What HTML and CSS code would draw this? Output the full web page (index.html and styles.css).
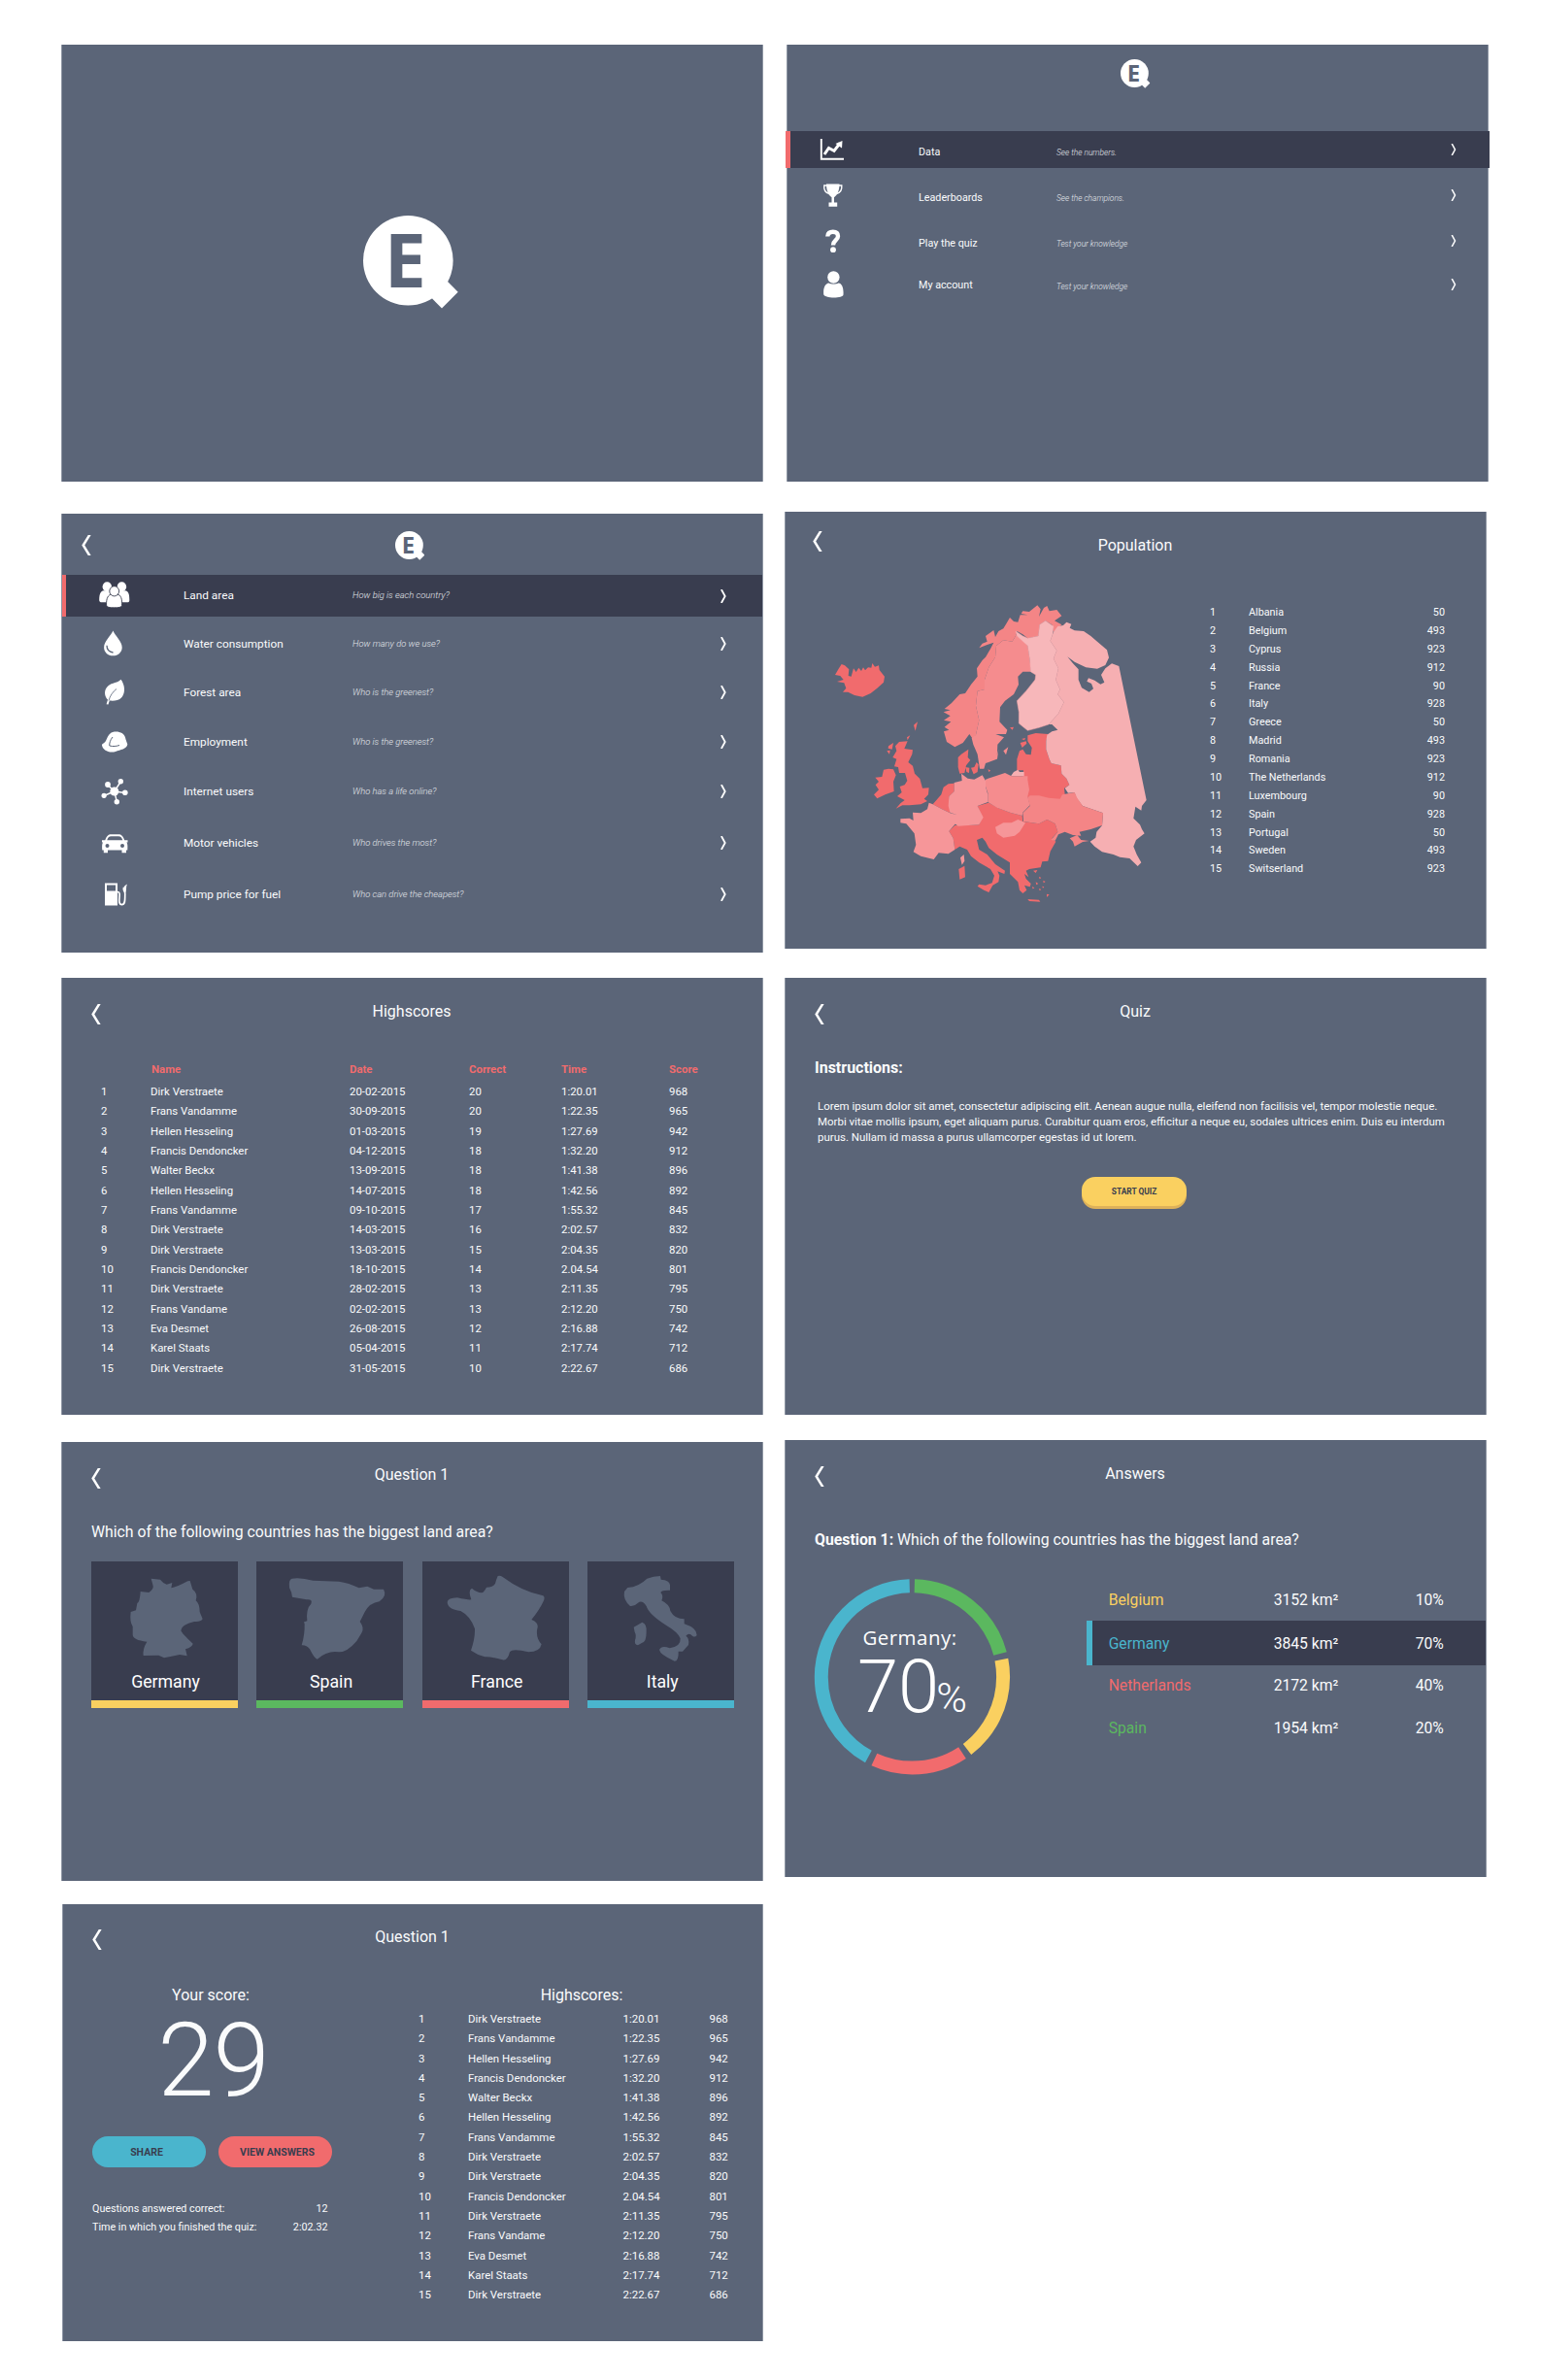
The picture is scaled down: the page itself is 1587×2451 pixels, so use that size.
FILE: index.html
```html
<!DOCTYPE html>
<html lang="en">
<head>
<meta charset="utf-8">
<title>EuroQuiz screens</title>
<link rel="stylesheet" href="styles.css">
</head>
<body>
<svg class="defs" width="0" height="0" aria-hidden="true">
  <symbol id="logo-shape" viewBox="0 0 98 96">
    <circle cx="46.3" cy="46.3" r="46.3" fill="#fff"/>
    <path d="M60 60L87.3 68.3L97.7 78.7L81 95.4L71.3 85.7Z" fill="#fff"/>
  </symbol>
  <symbol id="back" viewBox="0 0 10 21"><path d="M8.800 -1L1.700 10.5L8.800 22" fill="none" stroke="#fff" stroke-width="2.500"/></symbol>
  <symbol id="next" viewBox="0 0 6 14"><path d="M.9 0L4.700 7L.9 14" fill="none" stroke="#fff" stroke-width="1.800"/></symbol>
</svg>
<main class="board">
<div class="column column--left">

  <section class="screen splash">
    <svg class="splash-logo" viewBox="0 0 98 96"><use href="#logo-shape"/><text x="21.800" y="74" class="logo-letter">E</text></svg>
  </section>

  <section class="screen categories">
    <header class="bar bar--logo">
      <svg class="back"><use href="#back"/></svg>
      <svg class="small-logo" viewBox="0 0 98 96"><use href="#logo-shape"/><text x="21.800" y="74" class="logo-letter">E</text></svg>
    </header>
    <nav class="menu">
      <a class="row row--active">
        <svg class="icon" viewBox="0 0 32 28"><g fill="#fff"><ellipse cx="8.3" cy="5.2" rx="4.7" ry="5"/><ellipse cx="23.4" cy="5.2" rx="4.7" ry="5"/><path d="M.2 19C.2 12 2 9.5 4.5 9.2H12V21.3H4C1.500 21.500.2 21 .2 19ZM31.300 19C31.300 12 30 9.500 27 9.200H20V21.300H28C30.500 21.500 31.300 21 31.300 19Z"/></g><g fill="#fff" stroke="#393d4f" stroke-width=".9"><path d="M7.600 24C7.300 17 9.500 13.500 12.500 13.300H19C22.500 13.500 24 18 23.500 24.500C23 26.500 20 26.800 15.600 26.800C11 26.800 7.800 26.500 7.600 24Z"/><ellipse cx="15.700" cy="9.800" rx="4.900" ry="5.100"/></g></svg>
        <span class="label">Land area</span><span class="hint">How big is each country?</span>
        <svg class="next"><use href="#next"/></svg>
      </a>
      <a class="row">
        <svg class="icon" viewBox="0 0 32 28"><path d="M14.400.500C16 5 23.700 11.500 23.700 17.700C23.700 22.600 19.600 26.300 14.400 26.300S5.100 22.600 5.100 17.700C5.100 11.500 12.700 5 14.400.500Z" fill="#fff"/><path d="M8 15.800C8 19.500 10 22.300 14.500 23" fill="none" stroke="#5b6578" stroke-width="1.300"/></svg>
        <span class="label">Water consumption</span><span class="hint">How many do we use?</span>
        <svg class="next"><use href="#next"/></svg>
      </a>
      <a class="row">
        <svg class="icon" viewBox="0 0 32 28"><path d="M22.500.700C26.500 6 27.500 14 23.500 19C20 23 15 22.800 10.800 22.600L9.500 26.600L7.600 26.200L9 21.600C5.500 18 4.500 11.500 9.500 7.200C13 4 20 4 22.500.700Z" fill="#fff"/><path d="M18 10.500C14 13.500 11 18 10 22.600" fill="none" stroke="#5b6578" stroke-width=".8"/></svg>
        <span class="label">Forest area</span><span class="hint">Who is the greenest?</span>
        <svg class="next"><use href="#next"/></svg>
      </a>
      <a class="row row--fourth">
        <svg class="icon" viewBox="0 0 32 28"><path d="M3 17.500C3 15.500 5 16 7 13C8.500 10 10 5 14 4C20 2.500 26 5 27 9.500C27.500 12 28.500 14 29.300 16.500C28.500 21.500 22 22 17 24C10 26 3.500 22 3 17.500Z" fill="#fff"/><path d="M14 9C11.500 12 10.500 15.500 10.800 18C14.500 19 18 18.500 21 17.500" fill="none" stroke="#5b6578" stroke-width="1"/></svg>
        <span class="label">Employment</span><span class="hint">Who is the greenest?</span>
        <svg class="next"><use href="#next"/></svg>
      </a>
      <a class="row row--fifth">
        <svg class="icon" viewBox="0 0 32 28"><path d="M15.800 14L22.300 4M15.800 14L9 7.500M15.800 14L5 18.500M15.800 14L26.700 15.500M15.800 14L18.300 24.500" stroke="#fff" stroke-width="1.400"/><g fill="#fff"><circle cx="15.800" cy="14" r="4.500"/><circle cx="22.300" cy="3.700" r="2.700"/><circle cx="9" cy="7" r="2.900"/><circle cx="5.100" cy="18.300" r="2.600"/><circle cx="26.800" cy="15.300" r="2.800"/><circle cx="18.300" cy="24.700" r="2.700"/></g></svg>
        <span class="label">Internet users</span><span class="hint">Who has a life online?</span>
        <svg class="next"><use href="#next"/></svg>
      </a>
      <a class="row row--late">
        <svg class="icon" viewBox="0 0 32 28"><path d="M3 11.300H6.300C7.800 7 9.500 5.300 12.500 5.300H20C23 5.300 24.800 7 26.200 11.300H29.500V13.500H28.300C29.500 15 29.500 17 29.300 21.500H28V24.300H23.500V21.500H9V24.300H4.800V21.500H3.300C3 17 3 15 4.200 13.500H3Z" fill="#fff"/><path d="M8.200 11.300C9.200 8.300 10 7.200 12.500 7.200H20C22.500 7.200 23.300 8.300 24.300 11.300Z" fill="#5b6578"/><circle cx="8.500" cy="17" r="2" fill="#5b6578"/><circle cx="24" cy="17" r="2" fill="#5b6578"/></svg>
        <span class="label">Motor vehicles</span><span class="hint">Who drives the most?</span>
        <svg class="next"><use href="#next"/></svg>
      </a>
      <a class="row row--late">
        <svg class="icon" viewBox="0 0 32 28"><path d="M6 2.500H19V25.500H6Z" fill="#fff"/><path d="M8 4.500H17V10.500H8Z" fill="#5b6578"/><path d="M19 11.500C21.500 11.500 21.300 14 21 17C20.500 21 20.500 24.600 23.500 24.600C27.500 24.600 26.500 19 26.800 14C27 10 24.500 10 25.500 7" fill="none" stroke="#fff" stroke-width="1.700"/><path d="M25 11C24.500 8 25.500 5 29 3.500C27.500 6 28.500 9 27.500 12Z" fill="#fff"/></svg>
        <span class="label">Pump price for fuel</span><span class="hint">Who can drive the cheapest?</span>
        <svg class="next"><use href="#next"/></svg>
      </a>
    </nav>
  </section>

  <section class="screen highscores">
    <header class="bar"><svg class="back"><use href="#back"/></svg><h1>Highscores</h1></header>
    <div class="score-grid score-grid--head"><b></b><b>Name</b><b>Date</b><b>Correct</b><b>Time</b><b>Score</b></div>
    <div class="score-grid">
      <span>1</span><span>Dirk Verstraete</span><span>20-02-2015</span><span>20</span><span>1:20.01</span><span>968</span>
      <span>2</span><span>Frans Vandamme</span><span>30-09-2015</span><span>20</span><span>1:22.35</span><span>965</span>
      <span>3</span><span>Hellen Hesseling</span><span>01-03-2015</span><span>19</span><span>1:27.69</span><span>942</span>
      <span>4</span><span>Francis Dendoncker</span><span>04-12-2015</span><span>18</span><span>1:32.20</span><span>912</span>
      <span>5</span><span>Walter Beckx</span><span>13-09-2015</span><span>18</span><span>1:41.38</span><span>896</span>
      <span>6</span><span>Hellen Hesseling</span><span>14-07-2015</span><span>18</span><span>1:42.56</span><span>892</span>
      <span>7</span><span>Frans Vandamme</span><span>09-10-2015</span><span>17</span><span>1:55.32</span><span>845</span>
      <span>8</span><span>Dirk Verstraete</span><span>14-03-2015</span><span>16</span><span>2:02.57</span><span>832</span>
      <span>9</span><span>Dirk Verstraete</span><span>13-03-2015</span><span>15</span><span>2:04.35</span><span>820</span>
      <span>10</span><span>Francis Dendoncker</span><span>18-10-2015</span><span>14</span><span>2.04.54</span><span>801</span>
      <span>11</span><span>Dirk Verstraete</span><span>28-02-2015</span><span>13</span><span>2:11.35</span><span>795</span>
      <span>12</span><span>Frans Vandame</span><span>02-02-2015</span><span>13</span><span>2:12.20</span><span>750</span>
      <span>13</span><span>Eva Desmet</span><span>26-08-2015</span><span>12</span><span>2:16.88</span><span>742</span>
      <span>14</span><span>Karel Staats</span><span>05-04-2015</span><span>11</span><span>2:17.74</span><span>712</span>
      <span>15</span><span>Dirk Verstraete</span><span>31-05-2015</span><span>10</span><span>2:22.67</span><span>686</span>
    </div>
  </section>

  <section class="screen question">
    <header class="bar"><svg class="back"><use href="#back"/></svg><h1>Question 1</h1></header>
    <p class="ask">Which of the following countries has the biggest land area?</p>
    <div class="cards">
      <div class="card card--yellow"><svg viewBox="112 384 453 330"><path d="M297 437L325 440Q335 453 345 455L362 450L359 466Q375 464 410 445L417 444L425 470Q442 482 435 505Q447 515 447 540L456 562Q450 572 430 570Q390 580 389 597Q390 605 426 638Q425 648 403 655L408 676L385 672L360 677L337 682L320 674L273 675Q270 655 284 632Q240 628 240 610V585Q230 570 234 540L250 535L254 513Q262 510 264 477L290 480Q305 470 303 460Z"/></svg><span>Germany</span></div>
      <div class="card card--green"><svg viewBox="625 384 453 330"><path d="M735 437Q760 432 800 443L880 446Q910 450 942 466L968 461L988 470L1018 470Q1030 490 1005 508Q975 512 960 540L945 570Q960 590 950 605L935 630Q905 665 880 664Q845 658 813 686Q805 685 790 655Q780 642 765 643Q775 610 774 575Q766 572 782 568Q778 530 794 515Q800 500 780 502L736 494Q735 480 727 465Q724 440 735 437Z"/></svg><span>Spain</span></div>
      <div class="card card--red"><svg viewBox="42 382 453 330"><path d="M275 427Q283 425 290 430Q350 475 415 488Q422 492 416 505Q405 530 379 562Q400 570 398 585Q390 615 410 638Q405 662 370 662Q320 650 312 662Q305 690 290 686Q250 675 235 677Q210 670 192 657Q205 620 204 590Q190 550 160 535Q120 530 119 508Q120 495 150 494Q185 502 193 500Q182 470 195 465Q210 478 225 479Q232 478 240 462Q268 462 270 440Z"/></svg><span>France</span></div>
      <div class="card card--teal"><svg viewBox="556 382 453 330"><path d="M680 463Q715 460 740 435Q760 427 781 427L783 438Q810 440 811 455V471Q785 470 782 478Q792 488 785 503Q810 515 812 535Q825 560 855 560V575Q895 588 894 610Q888 618 880 612Q870 600 860 612Q872 620 868 640L850 660H837Q838 690 825 690Q780 670 778 655Q785 640 810 650Q845 645 843 620Q835 600 800 580Q745 545 738 520Q725 500 712 510Q700 522 688 520Q665 500 670 475ZM699 585L725 570Q740 575 738 600Q738 630 725 633L712 641Q700 640 703 625Q708 610 702 600Z"/></svg><span>Italy</span></div>
    </div>
  </section>

  <section class="screen result">
    <header class="bar"><svg class="back"><use href="#back"/></svg><h1>Question 1</h1></header>
    <div class="result-body">
      <div class="summary">
        <h2>Your score:</h2>
        <div class="big-score">29</div>
        <div class="actions"><a class="pill pill--teal">SHARE</a><a class="pill pill--red">VIEW ANSWERS</a></div>
        <div class="stats"><span>Questions answered correct:</span><span>12</span><span>Time in which you finished the quiz:</span><span>2:02.32</span></div>
      </div>
      <div class="ranking">
        <h2>Highscores:</h2>
        <div class="rank-grid">
          <span>1</span><span>Dirk Verstraete</span><span>1:20.01</span><span>968</span>
          <span>2</span><span>Frans Vandamme</span><span>1:22.35</span><span>965</span>
          <span>3</span><span>Hellen Hesseling</span><span>1:27.69</span><span>942</span>
          <span>4</span><span>Francis Dendoncker</span><span>1:32.20</span><span>912</span>
          <span>5</span><span>Walter Beckx</span><span>1:41.38</span><span>896</span>
          <span>6</span><span>Hellen Hesseling</span><span>1:42.56</span><span>892</span>
          <span>7</span><span>Frans Vandamme</span><span>1:55.32</span><span>845</span>
          <span>8</span><span>Dirk Verstraete</span><span>2:02.57</span><span>832</span>
          <span>9</span><span>Dirk Verstraete</span><span>2:04.35</span><span>820</span>
          <span>10</span><span>Francis Dendoncker</span><span>2.04.54</span><span>801</span>
          <span>11</span><span>Dirk Verstraete</span><span>2:11.35</span><span>795</span>
          <span>12</span><span>Frans Vandame</span><span>2:12.20</span><span>750</span>
          <span>13</span><span>Eva Desmet</span><span>2:16.88</span><span>742</span>
          <span>14</span><span>Karel Staats</span><span>2:17.74</span><span>712</span>
          <span>15</span><span>Dirk Verstraete</span><span>2:22.67</span><span>686</span>
        </div>
      </div>
    </div>
  </section>
</div>

<div class="column column--right">

  <section class="screen home">
    <header class="home-head"><svg class="small-logo" viewBox="0 0 98 96"><use href="#logo-shape"/><text x="21.800" y="74" class="logo-letter">E</text></svg></header>
    <nav class="home-menu">
      <a class="row row--active">
        <svg class="icon" viewBox="0 0 28 28"><path d="M2.800 3V23.700H26" fill="none" stroke="#fff" stroke-width="1.900"/><path d="M6 19L10.500 12.500L16 15.300L22 7.500" fill="none" stroke="#fff" stroke-width="3"/><path d="M17.500 8L24.500 5L24 12.500Z" fill="#fff"/></svg>
        <span class="label">Data</span><span class="hint">See the numbers.</span><svg class="next"><use href="#next"/></svg>
      </a>
      <a class="row">
        <svg class="icon" viewBox="0 0 28 28"><path d="M8 2.500H21.500C21.500 10 19 14 16 16.200V21.500H19.200V25.800H10.500V21.500H13.500V16.200C10.500 14 8 10 8 2.500Z" fill="#fff"/><path d="M9 4H5.800C5.300 8 7 11.500 11 12.500M20.500 4H23.800C24.200 8 22.500 11.500 18.500 12.500" fill="none" stroke="#fff" stroke-width="1.400"/></svg>
        <span class="label">Leaderboards</span><span class="hint">See the champions.</span><svg class="next"><use href="#next"/></svg>
      </a>
      <a class="row">
        <svg class="icon" viewBox="0 0 28 28"><path d="M9.300 9.500C9.300 6 11.500 4.700 14.800 4.700C18.300 4.700 20 6.500 20 9.300C20 13.500 15 13.500 15 18.500" fill="none" stroke="#fff" stroke-width="4.400"/><circle cx="15" cy="23.200" r="2.900" fill="#fff"/></svg>
        <span class="label">Play the quiz</span><span class="hint">Test your knowledge</span><svg class="next"><use href="#next"/></svg>
      </a>
      <a class="row row--last">
        <svg class="icon" viewBox="0 0 28 28"><g fill="#fff"><ellipse cx="15.400" cy="6.500" rx="6.200" ry="6.200"/><path d="M5.200 24C4.700 17 7 13 10.500 12.500C13 13.800 18 13.800 20.500 12.500C24 13 26 17 25.500 24.500C25.500 28.500 5.200 28.500 5.200 24Z"/></g></svg>
        <span class="label">My account</span><span class="hint">Test your knowledge</span><svg class="next"><use href="#next"/></svg>
      </a>
    </nav>
  </section>

  <section class="screen population">
    <header class="bar"><svg class="back"><use href="#back"/></svg><h1>Population</h1></header>
    <div class="population-body">
      <svg class="map" viewBox="0 0 1080 1050">
        <g fill="#f16b6d">
          <path d="M60 285L70 268L80 252L90 256L103 268L101 288L110 290L117 265L125 276L133 263L141 273L147 262L153 271L162 262L172 263L175 249L183 260L195 256L197 270L213 290L210 308L190 326L170 342L145 353L120 348L100 338L84 338L94 326L88 310L66 306L86 300L76 288Z"/>
          <path d="M258 492L284 490L274 513L300 517L298 530L286 555L300 566L306 590L322 606L330 635L350 634L348 655L335 668L345 675L325 685L290 688L268 688L248 698L262 682L275 672L252 660L266 648L260 630L275 625L283 612L276 588L258 588L255 570L243 568L250 545L238 540L250 520L246 505Z"/>
          <path d="M210 578L225 575L240 577L248 595L240 615L242 645L215 655L190 667L180 655L195 640L185 625L195 615L184 602L205 600ZM225 505L240 495L236 515L224 512ZM220 520L230 518L228 530ZM303 440L315 430L308 458ZM282 478L292 472L284 487Z"/>
          <path d="M655 472L680 465L718 468L712 490L712 515L722 545L728 558L758 565L760 590L775 605L784 625L768 635L770 655L755 672L720 668L690 662L655 665L650 640L645 615L640 598L642 580L622 580L622 545L630 520L640 515L650 530L665 532L668 510L655 490ZM632 495L650 490L652 497L638 510ZM636 483L648 480L645 487ZM600 448L612 446L608 455Z"/>
          <path d="M440 540L450 530L472 515L470 540L478 548L465 565L460 588L445 590L440 570ZM463 570L475 572L474 588L466 585ZM480 572L490 570L497 555L503 562L500 585L488 592ZM532 577L540 580L536 586Z"/>
          <path d="M362 685L388 655L395 632L410 622L428 620L428 645L412 660L415 712L390 700Z"/>
          <path d="M500 690L535 680L565 697L600 710L638 720L640 738L690 745L715 732L740 745L748 770L730 790L742 800L725 830L718 860L700 862L695 880L660 885L650 890L658 910L645 900L650 915L665 930L662 940L645 935L652 950L640 960L630 950L625 925L600 900L600 865L560 840L535 820L525 800L515 788L498 795L505 825L530 840L555 870L585 890L583 900L562 892L568 905L565 925L547 935L535 957L520 950L500 938L505 932L525 935L545 928L552 905L540 885L505 865L480 845L468 825L445 815L430 825L425 790L412 768L430 750L470 750L505 748L515 725Z"/>
          <path d="M442 885L460 875L462 910L445 917ZM655 978L690 980L694 986L660 984ZM672 890L685 888L680 897ZM690 908L697 912L692 916ZM680 925L688 930L682 934ZM703 920L710 924L704 928ZM714 962L722 964L714 972ZM690 945L697 948L692 952ZM700 938L706 940L702 944ZM670 938L676 944L670 946Z"/>
        </g>
        <path fill="#f48586" d="M505 202L515 188L530 182L525 165L550 147L555 168L565 150L580 142L590 125L600 108L612 120L625 122L632 100L655 100L635 96L640 88L660 90L685 70L695 82L690 105L705 78L715 72L722 88L745 84L760 103L738 118L760 130L735 152L730 130L710 118L692 130L688 165L655 172L640 160L622 150L618 165L607 182L580 178L558 195L555 230L535 262L522 300L522 330L500 335L495 380L505 425L495 470L487 485L475 468L455 495L430 508L405 492L396 460L412 455L398 446L418 430L396 425L416 412L395 400L416 394L398 390L420 372L445 345L462 342L480 315L500 290L498 265L515 240L525 230L540 205L550 185L530 192Z"/>
        <path fill="#f58c8e" d="M558 195L580 178L607 182L618 165L622 155L655 195L662 240L665 275L640 275L625 290L627 315L612 345L585 365L570 385L568 430L592 455L588 468L556 468L582 478L562 500L560 545L525 558L520 575L507 575L500 530L487 500L482 480L495 470L505 425L495 380L500 335L522 330L522 300L535 262L555 230ZM580 520L595 508L588 532ZM557 545L565 515L561 545Z"/>
        <path fill="#f7b7ba" stroke="#f6a4a8" stroke-width="1.500" d="M618 150L640 165L655 172L688 165L692 130L710 118L735 135L732 160L725 180L745 210L735 235L750 265L742 300L755 330L748 345L767 370L750 405L720 438L690 448L655 457L640 445L628 435L628 400L622 365L650 335L678 300L680 285L664 275L662 240L655 195L622 165Z"/>
        <path fill="#f6afb2" d="M735 152L748 135L765 132L775 122L790 128L785 140L800 148L828 150L850 165L870 182L900 208L906 232L895 255L870 266L835 262L800 245L778 229L795 250L812 268L812 300L822 325L845 338L858 328L852 312L838 305L843 295L862 302L880 314L892 308L882 285L895 265L915 250L937 258L1022 672L1008 690L1006 704L988 692L982 728L1002 748L1008 762L1016 775L990 795L982 815L992 840L1006 865L995 876L970 852L940 848L920 840L885 832L862 815L848 800L865 788L868 770L885 750L888 712L860 702L825 690L805 665L800 648L780 650L770 635L784 625L775 605L760 590L758 565L728 558L722 545L712 515L712 490L715 470L730 460L748 455L730 438L720 438L750 405L767 370L748 345L755 330L742 300L750 265L735 235L745 210L725 180ZM603 598L612 585L625 578L630 585L644 585V598Z"/>
        <path fill="#f58c8e" d="M525 608L560 596L585 588L605 598H655L655 610L660 640L655 660L662 688L640 710L638 720L600 710L560 695L532 678L532 650L525 630Z"/>
        <path fill="#f69699" d="M450 590L470 605L490 608L515 595L525 612L525 630L532 655L532 678L500 690L518 725L505 748L440 752L430 745L438 718L415 710L410 690L412 660L428 645L428 618L452 612ZM555 755L580 742L605 742L625 732L648 742L630 770L615 782L580 788L560 775ZM350 680L362 685L390 700L415 712L438 718L432 745L412 768L425 790L430 825L410 838L380 835L365 855L325 845L302 832L310 810L305 775L280 745L262 742V730L290 728L302 735L300 710L325 712L345 700ZM447 850L458 840L460 860L452 872Z"/>
        <path fill="#f48586" d="M662 658L690 658L720 665L755 668L762 655L800 648L808 665L825 690L860 702L888 712L885 750L850 762L815 770L820 782L795 780L770 770L750 778L740 797L727 795L748 770L740 745L715 732L690 745L642 738L640 712L662 690L655 665ZM785 790L808 780L820 795L845 798L825 801L800 815L795 800Z"/>
      </svg>
      <div class="country-grid">
        <span>1</span><span>Albania</span><span>50</span>
        <span>2</span><span>Belgium</span><span>493</span>
        <span>3</span><span>Cyprus</span><span>923</span>
        <span>4</span><span>Russia</span><span>912</span>
        <span>5</span><span>France</span><span>90</span>
        <span>6</span><span>Italy</span><span>928</span>
        <span>7</span><span>Greece</span><span>50</span>
        <span>8</span><span>Madrid</span><span>493</span>
        <span>9</span><span>Romania</span><span>923</span>
        <span>10</span><span>The Netherlands</span><span>912</span>
        <span>11</span><span>Luxembourg</span><span>90</span>
        <span>12</span><span>Spain</span><span>928</span>
        <span>13</span><span>Portugal</span><span>50</span>
        <span>14</span><span>Sweden</span><span>493</span>
        <span>15</span><span>Switserland</span><span>923</span>
      </div>
    </div>
  </section>

  <section class="screen quiz">
    <header class="bar"><svg class="back"><use href="#back"/></svg><h1>Quiz</h1></header>
    <h2>Instructions:</h2>
    <p>Lorem ipsum dolor sit amet, consectetur adipiscing elit. Aenean augue nulla, eleifend non facilisis vel, tempor molestie neque.<br>Morbi vitae mollis ipsum, eget aliquam purus. Curabitur quam eros, efficitur a neque eu, sodales ultrices enim. Duis eu interdum<br>purus. Nullam id massa a purus ullamcorper egestas id ut lorem.</p>
    <a class="start">START QUIZ</a>
  </section>

  <section class="screen answers">
    <header class="bar"><svg class="back"><use href="#back"/></svg><h1>Answers</h1></header>
    <p class="ask"><b>Question 1:</b> Which of the following countries has the biggest land area?</p>
    <div class="answers-body">
      <svg class="ring" viewBox="0 0 204 204">
        <g fill="none" stroke-width="14" transform="rotate(-90 101.600 101.900)">
          <circle cx="101.600" cy="101.900" r="93.800" pathLength="360" stroke="#5bb85f" stroke-dasharray="73.700 286.300" stroke-dashoffset="-1.500"/>
          <circle cx="101.600" cy="101.900" r="93.800" pathLength="360" stroke="#fad060" stroke-dasharray="63.800 296.200" stroke-dashoffset="-79"/>
          <circle cx="101.600" cy="101.900" r="93.800" pathLength="360" stroke="#f16b6d" stroke-dasharray="58.100 301.900" stroke-dashoffset="-146.600"/>
          <circle cx="101.600" cy="101.900" r="93.800" pathLength="360" stroke="#4ab5cd" stroke-dasharray="149.500 210.500" stroke-dashoffset="-208.800"/>
        </g>
        <text class="ring-name" x="50.500" y="68.500">Germany:</text>
        <text class="ring-value" x="45" y="138.500">70</text>
        <text class="ring-unit" x="126.500" y="138.500">%</text>
      </svg>
      <div class="answer-list">
        <div class="answer answer--yellow"><b>Belgium</b><span>3152 km²</span><span>10%</span></div>
        <div class="answer answer--teal answer--active"><b>Germany</b><span>3845 km²</span><span>70%</span></div>
        <div class="answer answer--red"><b>Netherlands</b><span>2172 km²</span><span>40%</span></div>
        <div class="answer answer--green"><b>Spain</b><span>1954 km²</span><span>20%</span></div>
      </div>
    </div>
  </section>
</div>
</main>
</body>
</html>
```
FILE: styles.css
```css
:root {
  --slate: #5b6578;
  --dark: #393d4f;
  --red: #f16b6d;
  --teal: #4ab5cd;
  --yellow: #fad060;
  --green: #5bb85f;
}

* { box-sizing: border-box; }

body {
  margin: 0;
  background: #fff;
  color: #fafbfc;
  font-family: Roboto, sans-serif;
  font-size: 11.4px;
}

h1, h2, p { margin: 0; font-weight: 400; }
svg { display: block; }
.defs { position: absolute; }

.board { display: flex; height: 2451px; padding: 46px 0 0 63px; }
.column { width: 723px; }
.column--right { margin-left: 22px; }

.screen {
  display: flow-root;
  width: 723px;
  background: var(--slate);
  border: solid #8d95a3;
  border-width: 0 1px;
}

.logo-letter { font: 700 77px "Open Sans", sans-serif; fill: var(--slate); }
.small-logo { width: 30.500px; height: 30px; }

/* Header bar with the back chevron and a centred title */
.bar {
  display: grid;
  grid-template-columns: 60px 1fr 60px;
  padding: 24px 0 0;
  height: 48px;
}
.bar .back { width: 10px; height: 21px; margin: 3px 0 0 30px; }
.bar h1 { margin: 1px 1px 0 0; font-size: 16px; line-height: 20px; text-align: center; }

/* Splash */
.splash { display: flex; align-items: center; justify-content: center; height: 450px; padding: 0 4px 2px 0; }
.splash-logo { width: 98px; height: 96px; }

/* Menu rows */
.row { display: grid; align-items: center; }
.row--active { background: var(--dark); border-left: 4px solid var(--red); }
.label { font-size: 11.800px; line-height: 16px; }
.hint { font-size: 9.400px; font-style: italic; font-weight: 300; color: #e4e7ec; line-height: 14px; }

/* Categories */
.categories { height: 452px; margin-top: 33px; }
.bar--logo { height: 63px; padding-top: 18px; }
.bar--logo .back { margin: 4px 0 0 20px; }
.bar--logo .small-logo { justify-self: center; margin-right: 5px; }
.menu .row { grid-template-columns: 87px 174px 1fr 6px; height: 43px; padding: 0 37px 0 38px; margin-top: 7px; }
.menu .row--active { padding: 0 37px 1px 34px; margin-top: 0; }
.menu .row--active + .row { margin-top: 6px; }
.menu .row--fourth { margin-top: 8px; }
.menu .row--fifth { margin-top: 8px; }
.menu .row--late { margin-top: 10px; }
.menu .icon { width: 32px; height: 28px; }
.menu .next { width: 6px; height: 14px; margin-top: 1px; }

/* Highscores */
.highscores { height: 450px; margin-top: 26px; }
.score-grid {
  display: grid;
  grid-template-columns: 51px 205px 123px 95px 111px auto;
  grid-auto-rows: 20.330px;
  line-height: 21px;
  margin-left: 40px;
}
.score-grid--head { margin-top: 36px; color: var(--red); grid-auto-rows: 23px; }
.score-grid--head b:nth-child(2) { padding-left: 1px; }

/* Question */
.question { height: 452px; margin-top: 28px; }
.question .bar h1 { margin-top: 0; }
.ask { font-size: 15.800px; line-height: 20px; }
.question .ask { margin: 35px 0 0 30px; }
.cards { display: grid; grid-template-columns: repeat(4, 151px); gap: 19.600px; margin: 20px 0 0 29.500px; }
.card { height: 151px; background: var(--dark); border-bottom: 8px solid; text-align: center; }
.card svg { width: 151px; height: 110px; fill: var(--slate); }
.card span { display: block; margin: 2px 0 0 3px; font-size: 17.700px; line-height: 24px; color: #fff; }
.card--yellow { border-color: var(--yellow); }
.card--green { border-color: var(--green); }
.card--red { border-color: var(--red); }
.card--teal { border-color: var(--teal); }

/* Result */
.result { width: 722px; height: 450px; margin: 24px 0 0 1px; }
.result .bar { padding-top: 23px; height: 47px; }
.result-body { display: flex; margin-top: 37px; }
.result h2 { font-size: 16px; line-height: 20px; text-align: center; }
.summary { width: 248px; margin-left: 29.500px; }
.summary h2 { margin-right: 3px; }
.big-score { margin-top: 7px; padding-left: 2px; font-size: 105px; font-weight: 300; line-height: 101px; text-align: center; letter-spacing: -1px; }
.actions { display: flex; gap: 13px; margin-top: 27px; }
.pill { width: 117px; height: 32px; border-radius: 16px; font-size: 10.500px; font-weight: 700; line-height: 33px; text-align: center; color: var(--dark); }
.pill--teal { background: var(--teal); padding-right: 4px; }
.pill--red { background: var(--red); padding-left: 5px; }
.stats { display: grid; grid-template-columns: 1fr auto; grid-auto-rows: 18.900px; line-height: 20px; font-size: 10.750px; margin: 33px 5px 0 .500px; }
.stats span:nth-child(even) { text-align: right; }
.ranking { width: 320px; margin-left: 88.500px; }
.ranking h2 { width: 336px; }
.rank-grid { display: grid; grid-template-columns: 51px 159.500px 89px auto; grid-auto-rows: 20.310px; line-height: 21px; margin-top: 4px; font-size: 11.450px; }

/* Home */
.home { width: 723px; height: 450px; margin-left: 2px; }
.home-head { display: flex; justify-content: center; height: 89px; padding: 15px 4px 0 0; }
.home-menu { margin: 0 -2px 0 -2px; }
.home .row { grid-template-columns: 103px 142px 1fr 6px; height: 38px; padding: 0 34px 0 34px; margin-top: 9px; }
.home .row--active { padding-left: 29px; margin-top: 0; border-left-width: 5px; }
.home .row--last { margin-top: 7px; }
.home .icon { width: 28px; height: 28px; }
.home .label { font-size: 10.750px; padding-top: 5px; }
.home .hint { font-size: 8.350px; padding-top: 5px; }
.home .row--last .label { padding-top: 2px; }
.home .row--last .hint { padding-top: 4px; }
.home .next { width: 6px; height: 12px; }

/* Population */
.population { height: 450px; margin-top: 31px; }
.population .back { margin: -4px 0 0 28px; }
.population-body { display: flex; margin: 25px 0 0 31px; }
.map { width: 360px; height: 350px; }
.country-grid {
  display: grid;
  grid-template-columns: 40px 102px 100px;
  grid-auto-rows: 18.880px;
  align-content: start;
  margin: 21px 0 0 46px;
  line-height: 19px;
  font-size: 10.800px;
}
.country-grid span:nth-child(3n) { text-align: right; }

/* Quiz */
.quiz { height: 450px; margin-top: 30px; }
.quiz h2 { margin: 35px 0 0 30px; font-size: 16px; font-weight: 700; line-height: 20px; }
.quiz p { margin: 22px 0 0 33px; font-size: 11.480px; line-height: 15.800px; white-space: nowrap; }
.start {
  display: block;
  width: 108px;
  height: 30px;
  margin: 33px auto 0 305px;
  border-radius: 14px;
  background: var(--yellow);
  box-shadow: 0 3px 0 #ddb15a;
  color: var(--dark);
  font-size: 8.400px;
  font-weight: 700;
  line-height: 31px;
  text-align: center;
}

/* Answers */
.answers { height: 450px; margin-top: 26px; }
.answers .ask { margin: 45px 0 0 30px; }
.answers-body { display: flex; margin: 29px 0 0 29px; }
.ring { width: 204px; height: 204px; }
.ring text { fill: #fff; }
.ring-name { font: 400 20.500px "Open Sans", sans-serif; letter-spacing: .500px; }
.ring-value { font: 300 76px Roboto, sans-serif; }
.ring-unit { font: 300 43px Roboto, sans-serif; }
.answer-list { margin-left: 77.500px; width: 411.500px; }
.answer {
  display: grid;
  grid-template-columns: 170px 146px auto;
  align-items: center;
  height: 44px;
  padding-left: 16.500px;
  border-left: 6px solid transparent;
  font-size: 15.700px;
}
.answer b { font-weight: 400; }
.answer--active { height: 46px; margin: 0 0 -2px; background: var(--dark); border-left-color: var(--teal); }
.answer--yellow b { color: var(--yellow); }
.answer--teal b { color: var(--teal); }
.answer--red b { color: var(--red); }
.answer--green b { color: var(--green); }
```
